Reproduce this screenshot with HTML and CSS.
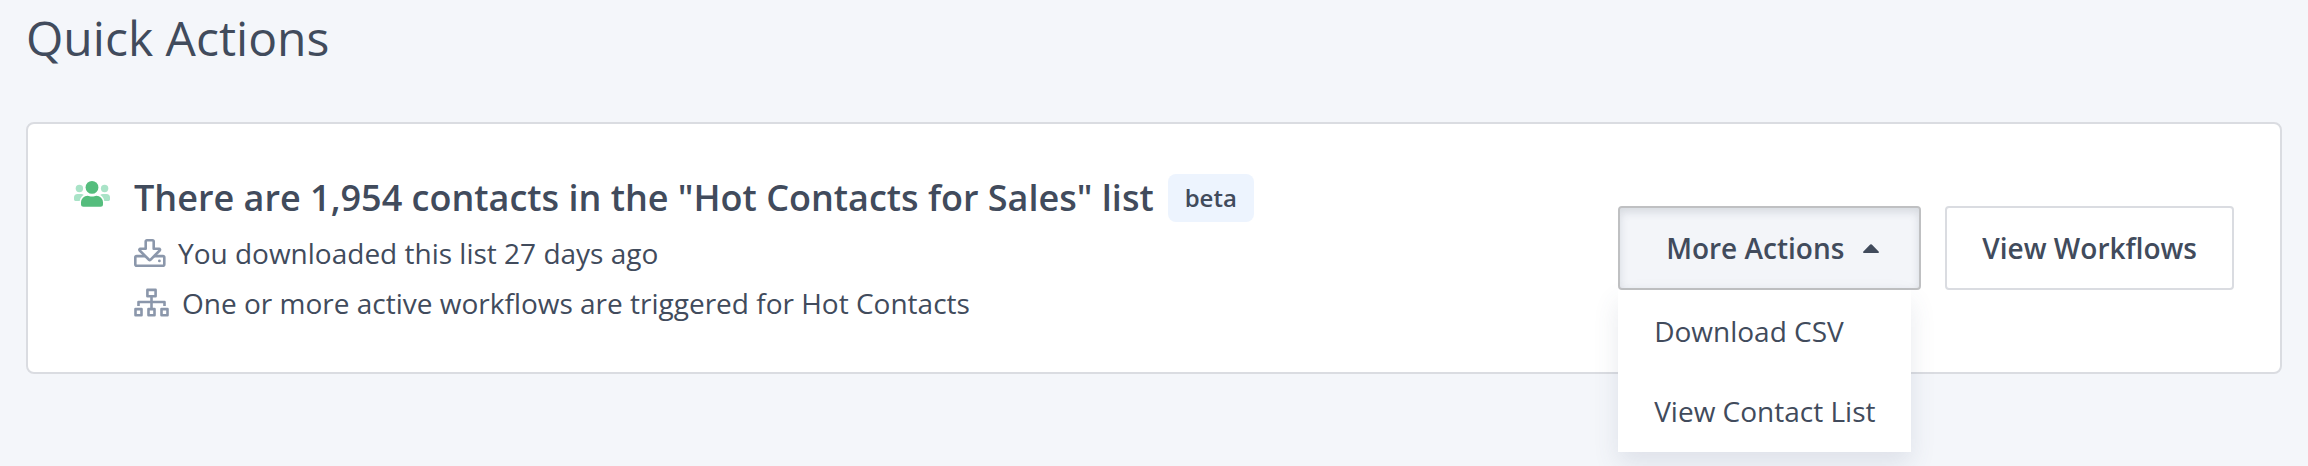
FILE: index.html
```html
<!DOCTYPE html>
<html lang="en">
<head>
<meta charset="utf-8">
<title>Quick Actions</title>
<link rel="stylesheet" href="styles.css">
</head>
<body>
<main class="page">
  <h1 class="page-title">Quick Actions</h1>
  <section class="card">
    <svg class="card-icon" width="36" height="26" viewBox="0 0 36 26" aria-hidden="true">
      <g fill="#a9e3c7">
        <circle cx="5.4" cy="7.5" r="3.7"/>
        <circle cx="30.6" cy="7.5" r="3.7"/>
        <path d="M0 16.6a3.6 3.6 0 0 1 3.6-3.6h3.6c1 0 1.9.4 2.6 1.1-2.3 1.3-3.7 3.4-4.1 5.9H1.4A1.4 1.4 0 0 1 0 18.6z"/>
        <path d="M36 16.6a3.6 3.6 0 0 0-3.6-3.6h-3.6c-1 0-1.9.4-2.6 1.1 2.3 1.3 3.7 3.4 4.1 5.9h4.3a1.4 1.4 0 0 0 1.4-1.4z"/>
      </g>
      <g fill="#55bd7d">
        <circle cx="18" cy="6.4" r="6.4"/>
        <path d="M7 21.3a6.6 6.6 0 0 1 6.6-6.6c1.5 0 2.4.9 4.4.9s2.9-.9 4.4-.9a6.6 6.6 0 0 1 6.6 6.6v2a2.5 2.5 0 0 1-2.5 2.5h-17A2.5 2.5 0 0 1 7 23.3z"/>
      </g>
    </svg>
    <div class="summary">
      <h2 class="summary-title">There are 1,954 contacts in the "Hot Contacts for Sales" list <span class="badge">beta</span></h2>
      <p class="detail">
        <svg width="32" height="28" viewBox="0 0 32 28" fill="none" stroke="#8b97ab" stroke-width="2.6" stroke-linejoin="round" aria-hidden="true">
          <rect x="1.3" y="17.1" width="29" height="9.6" rx="1.5"/>
          <path fill="#fff" d="M12.9 1.3h5.6a1.2 1.2 0 0 1 1.2 1.2v7.3h5.3c1 0 1.4 1 .7 1.7l-9.3 9.3a1 1 0 0 1-1.4 0l-9.3-9.3c-.7-.7-.3-1.7.7-1.7h5.3V2.500a1.2 1.2 0 0 1 1.2-1.2z"/>
          <circle cx="25.4" cy="21.9" r="1.4" fill="#8b97ab" stroke="none"/>
        </svg>
        You downloaded this list 27 days ago
      </p>
      <p class="detail">
        <svg width="36" height="30" viewBox="0 0 36 30" fill="none" stroke="#8b97ab" stroke-width="2.6" stroke-linejoin="round" aria-hidden="true">
          <rect x="13.4" y="1.9" width="8.2" height="6.4"/>
          <rect x="1.5" y="21.1" width="6" height="6.2"/>
          <rect x="14.5" y="21.1" width="6" height="6.2"/>
          <rect x="27.5" y="21.1" width="6" height="6.2"/>
          <path d="M17.5 8.3v12.8M4.5 18v-4h26v4"/>
        </svg>
        One or more active workflows are triggered for Hot Contacts
      </p>
    </div>
    <div class="actions">
      <div class="dropdown">
        <button class="button button-open" type="button" aria-haspopup="menu" aria-expanded="true" aria-controls="more-menu">
          More Actions
          <svg width="16" height="9" viewBox="0 0 16 9" aria-hidden="true"><path fill="#414b5c" d="M1 9C0 9-.3 8 .4 7.4L7.2.5a1.2 1.2 0 0 1 1.6 0l6.8 6.9c.7.6.4 1.6-.6 1.6z"/></svg>
        </button>
        <div class="menu" id="more-menu" role="menu">
          <button class="menu-item" type="button" role="menuitem">Download CSV</button>
          <button class="menu-item" type="button" role="menuitem">View Contact List</button>
        </div>
      </div>
      <button class="button" type="button">View Workflows</button>
    </div>
  </section>
</main>
</body>
</html>
```
FILE: styles.css
```css
* {
  box-sizing: border-box;
}

body {
  margin: 0;
  background: #f4f6fa;
  color: #414b5c;
  font-family: "Open Sans", "Noto Sans", sans-serif;
  font-size: 28px;
}

button {
  font: inherit;
  color: inherit;
  cursor: pointer;
}

.page {
  min-height: 100vh;
  padding: 0 26px;
}

.page-title {
  margin: 0 0 46px;
  font-size: 48px;
  font-weight: 400;
  line-height: 76px;
}

.card {
  display: flex;
  align-items: flex-start;
  gap: 24px;
  padding: 44px 46px;
  background: #fff;
  border: 2px solid #dadce1;
  border-radius: 8px;
}

.card-icon {
  flex: none;
  margin-top: 13px;
}

.summary {
  flex: 1;
}

.summary-title {
  display: flex;
  align-items: center;
  gap: 14px;
  margin: 0;
  font-size: 36px;
  font-weight: 600;
  line-height: 60px;
}

.badge {
  padding: 0 17px;
  background: #edf4fe;
  border-radius: 8px;
  font-size: 24px;
  font-weight: 600;
  line-height: 48px;
}

.detail {
  display: flex;
  align-items: center;
  gap: 12px;
  margin: 0;
  line-height: 50px;
}

.actions {
  display: flex;
  align-self: center;
  gap: 24px;
}

.dropdown {
  position: relative;
}

.button {
  display: flex;
  align-items: center;
  padding: 0 35px;
  background: #fff;
  border: 2px solid #dadce1;
  border-radius: 4px;
  font-weight: 600;
  line-height: 80px;
  white-space: nowrap;
}

.button-open {
  gap: 19px;
  padding: 0 40px 0 46px;
  background: #f3f5f9;
  border-color: #bfc0c2;
  box-shadow: inset 0 4px 8px rgba(65, 75, 92, 0.16);
}

.menu {
  position: absolute;
  top: 100%;
  left: 0;
  display: flex;
  flex-direction: column;
  padding: 1px 0;
  background: #fff;
  box-shadow: 0 12px 24px rgba(65, 85, 115, 0.12);
}

.menu-item {
  padding: 0 36px;
  background: none;
  border: 0;
  line-height: 80px;
  text-align: left;
  white-space: nowrap;
}
```
